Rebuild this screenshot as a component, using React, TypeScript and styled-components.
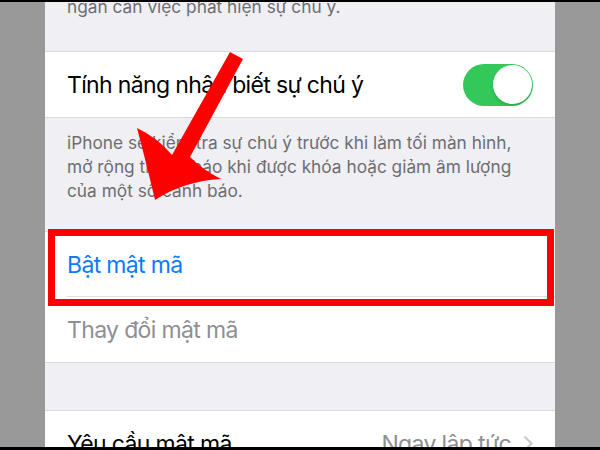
import React from "react";
import styled, { createGlobalStyle } from "styled-components";

const GlobalStyle = createGlobalStyle`
  html, body {
    margin: 0;
    padding: 0;
    background: #999999;
  }
  body {
    font-family: Inter, "Noto Sans", "DejaVu Sans", sans-serif;
    -webkit-font-smoothing: antialiased;
  }
`;

const Page = styled.div`
  position: relative;
  width: 600px;
  height: 450px;
  overflow: hidden;
  background: #999999;
  display: flex;
  flex-direction: column;
`;

const Bar = styled.div<{ $h: number }>`
  height: ${(p) => p.$h}px;
  flex: none;
  background: #000;
`;

const Stage = styled.div`
  flex: 1;
  display: flex;
  justify-content: center;
  min-height: 0;
`;

const Screen = styled.div`
  width: 510px;
  background: #efeff4;
  overflow: hidden;
  display: flex;
  flex-direction: column;
`;

const Scroll = styled.div`
  display: flex;
  flex-direction: column;
  margin-top: -7px;
`;

const Footnote = styled.p<{ $top: number; $bottom: number }>`
  margin: 0;
  padding: ${(p) => p.$top}px 30px ${(p) => p.$bottom}px 22px;
  font-size: 17.3px;
  line-height: 24px;
  color: #6d6d72;
  letter-spacing: 0;
`;

const Group = styled.div`
  background: #fff;
  border-top: 1px solid #d9d9de;
  border-bottom: 1px solid #d9d9de;
  display: flex;
  flex-direction: column;
`;

const Row = styled.div<{ $divider?: boolean }>`
  position: relative;
  height: 65px;
  display: flex;
  align-items: center;
  justify-content: space-between;
  padding: 0 22px;
  box-sizing: border-box;
  ${(p) =>
    p.$divider
      ? `&::after {
          content: "";
          position: absolute;
          left: 22px;
          right: 0;
          bottom: 0;
          height: 1px;
          background: #e2e2e6;
        }`
      : ""}
`;

const Label = styled.span<{ $tone?: "plain" | "link" | "muted" }>`
  font-size: 23px;
  letter-spacing: -0.65px;
  color: ${(p) =>
    p.$tone === "link" ? "#0a7aff" : p.$tone === "muted" ? "#8e8e93" : "#000"};
`;

const Value = styled.span`
  display: flex;
  align-items: center;
  gap: 12px;
  font-size: 23px;
  letter-spacing: -0.65px;
  color: #8e8e93;
`;

const Toggle = styled.div`
  width: 70px;
  height: 42px;
  border-radius: 21px;
  background: #34c759;
  display: flex;
  align-items: center;
  justify-content: flex-end;
  padding: 1.5px;
  box-sizing: border-box;
`;

const Knob = styled.div`
  width: 39px;
  height: 39px;
  border-radius: 50%;
  background: #fff;
  box-shadow: 0 2px 3px rgba(0, 0, 0, 0.15);
`;

const Spacer = styled.div<{ $h: number }>`
  height: ${(p) => p.$h}px;
`;

const Highlight = styled.div`
  position: absolute;
  left: 3px;
  right: 1px;
  top: -3px;
  bottom: -9px;
  border: 7px solid #ff0000;
  pointer-events: none;
  z-index: 2;
`;

const Pointer = styled.svg`
  position: absolute;
  left: 0;
  top: 0;
  z-index: 3;
  pointer-events: none;
`;

const Chevron = () => (
  <svg width="10" height="17" viewBox="0 0 10 17">
    <path d="M1.5 1.5 L8.5 8.5 L1.5 15.5" fill="none" stroke="#c7c7cc" strokeWidth="2.2" />
  </svg>
);

export default function App() {
  return (
    <>
      <GlobalStyle />
      <Page>
        <Bar $h={2} />
        <Stage>
          <Screen>
            <Scroll>
              <Footnote $top={0} $bottom={32}>
                ngăn cản việc phát hiện sự chú ý.
              </Footnote>
              <Group>
                <Row>
                  <Label>Tính năng nhận biết sự chú ý</Label>
                  <Toggle>
                    <Knob />
                  </Toggle>
                </Row>
              </Group>
              <Footnote $top={13} $bottom={28}>
                iPhone sẽ kiểm tra sự chú ý trước khi làm tối màn hình, mở rộng
                thông báo khi được khóa hoặc giảm âm lượng của một số cảnh báo.
              </Footnote>
              <Group>
                <Row $divider>
                  <Label $tone="link">Bật mật mã</Label>
                  <Highlight />
                </Row>
                <Row>
                  <Label $tone="muted">Thay đổi mật mã</Label>
                </Row>
              </Group>
              <Spacer $h={47} />
              <Group>
                <Row>
                  <Label>Yêu cầu mật mã</Label>
                  <Value>
                    Ngay lập tức
                    <Chevron />
                  </Value>
                </Row>
              </Group>
            </Scroll>
          </Screen>
        </Stage>
        <Bar $h={3} />
        <Pointer width="600" height="450" viewBox="0 0 600 450">
          <path
            d="M230 52 L243 59 L190 157 Q203 170 221 179 Q184 181 155 200 Q146 162 137 128 Q158 138 172 155 Z"
            fill="#ff0000"
          />
        </Pointer>
      </Page>
    </>
  );
}
